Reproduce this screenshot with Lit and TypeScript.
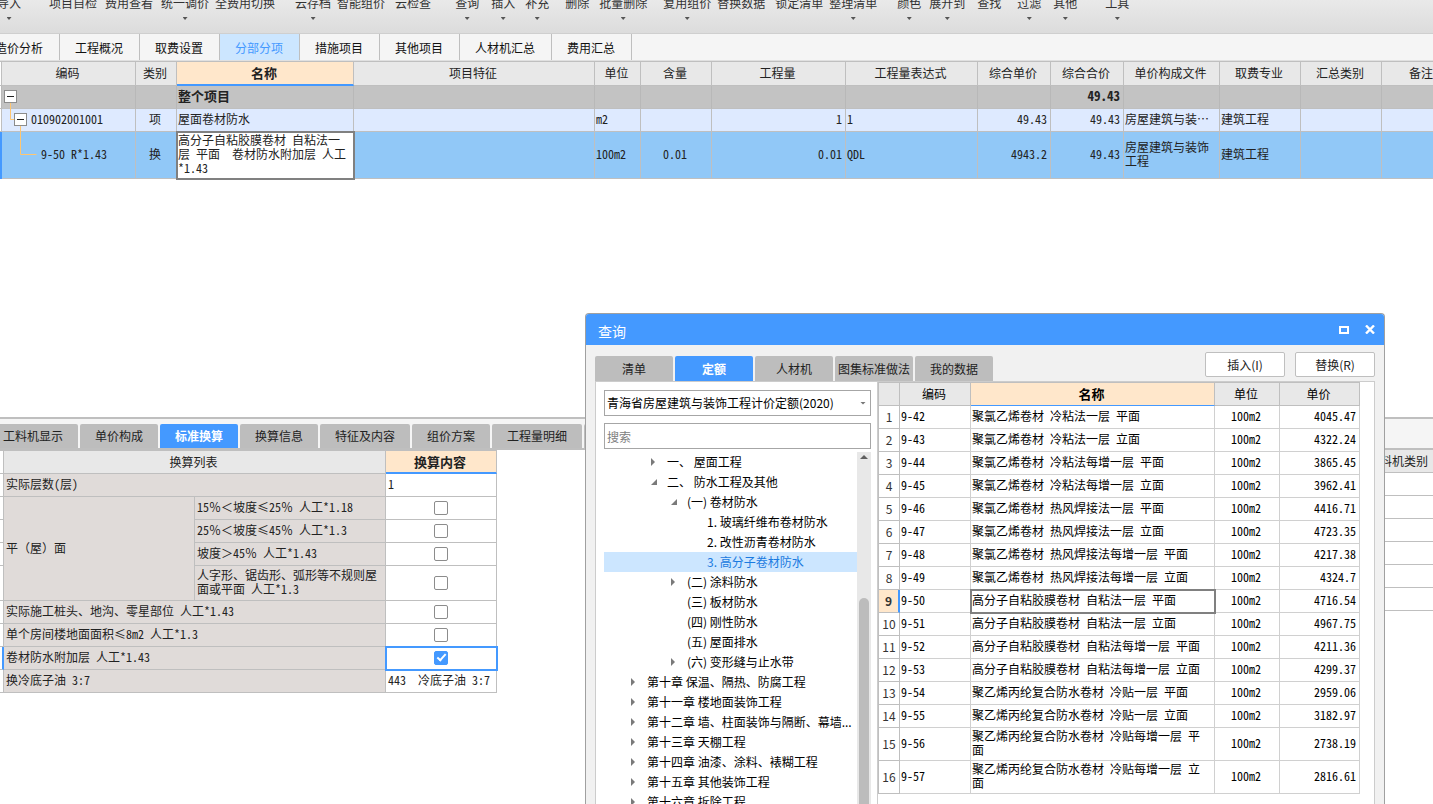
import { LitElement, html, css, svg, nothing } from "lit";
import { customElement } from "lit/decorators.js";
import { classMap } from "lit/directives/class-map.js";

const base = css`
  *, *::before, *::after { box-sizing: border-box; }
  :host {
    --ui: "Noto Sans CJK SC", "Noto Sans", sans-serif;
    --grid: "Noto Sans Mono CJK SC", "Noto Sans CJK SC", monospace;
    --blue: #4499ff;
    --line: #bfbfbf;
    --accent: #ffe7cb;
    box-sizing: border-box;
    font: 12px/18px var(--ui);
    color: #222;
  }
  button { font: inherit; color: inherit; border: 0; background: none; padding: 0; margin: 0; white-space: nowrap; }
  table { border-collapse: separate; border-spacing: 0; table-layout: fixed; font: 12px/14px var(--grid); }
  th, td { padding: 0 3px 2px 1px; font-weight: 400; text-align: left; vertical-align: middle; border: 0 solid var(--line); border-width: 0 1px 1px 0; overflow: hidden; }
  th { background: #e8e8e8; text-align: center; white-space: nowrap; }
  th.on { background: var(--accent); font-size: 13px; font-weight: 700; padding-bottom: 0; border-bottom: 2px solid var(--blue); }
  .c { text-align: center; }
  .r { text-align: right; }
`;

type Tool = [gap: number, label: string, menu?: boolean];
const TOOLS: Tool[] = [
  [0, "导入", true], [28, "项目自检"], [8, "费用查看"], [8, "统一调价", true], [6, "全费用切换"],
  [20, "云存档", true], [6, "智能组价"], [10, "云检查"], [24, "查询", true], [12, "插入", true],
  [10, "补充", true], [16, "删除"], [10, "批量删除", true], [16, "复用组价", true], [6, "替换数据"],
  [10, "锁定清单"], [6, "整理清单", true], [20, "颜色", true], [8, "展开到", true], [12, "查找"],
  [16, "过滤", true], [12, "其他", true], [28, "工具", true],
];
const TABS = ["造价分析", "工程概况", "取费设置", "分部分项", "措施项目", "其他项目", "人材机汇总", "费用汇总"];

@customElement("tool-bar")
class ToolBar extends LitElement {
  static styles = [base, css`
    :host { display: block; }
    .tools { display: flex; align-items: flex-start; height: 34px; overflow: hidden; background: linear-gradient(#e9e9e9, #dcdcdc); border-bottom: 1px solid #cfcfcf; }
    .tools button { display: flex; flex-direction: column; align-items: center; gap: 5px; flex: none; margin-top: -6px; color: #333; }
    .tools button:first-child { margin-left: -3px; }
    .arrow { width: 5px; height: 3px; background: #555; clip-path: polygon(0 0, 100% 0, 50% 100%); }
    .tabs { display: flex; height: 27px; background: #f5f5f5; border-bottom: 1px solid #e0e0e0; overflow: hidden; }
    .tabs button { flex: none; padding: 2px 16px 0 15px; border-right: 1px solid var(--line); color: #111; }
    .tabs button:first-child { margin-left: -20px; }
    .tabs .active { background: #cce6ff; color: var(--blue); }
  `];
  render() {
    return html`
      <div class="tools" role="toolbar">
        ${TOOLS.map(([gap, label, menu]) => html`
          <button style=${gap ? `margin-left:${gap}px` : nothing}>
            <span>${label}</span>${menu ? html`<span class="arrow"></span>` : nothing}
          </button>`)}
      </div>
      <nav class="tabs">
        ${TABS.map((t) => html`<button class=${classMap({ active: t === "分部分项" })}>${t}</button>`)}
      </nav>`;
  }
}

const expander = (x: number) => svg`
  <rect x=${x + 0.5} y="4.5" width="12" height="12" fill="#fff" stroke="#8c8c8c"></rect>
  <path d=${`M${x + 3} 10.5h7`} stroke="#222"></path>`;

@customElement("bill-grid")
class BillGrid extends LitElement {
  static styles = [base, css`
    :host { display: block; overflow: hidden; }
    table { width: 1462px; border-top: 1px solid var(--line); }
    .w-gut { width: 2px; } .w-code { width: 134px; } .w-kind { width: 41px; } .w-name { width: 177px; }
    .w-feat { width: 241px; } .w-unit { width: 46px; } .w-cont { width: 71px; } .w-qty { width: 134px; }
    .w-expr { width: 132px; } .w-price { width: 73px; } .w-file { width: 96px; } .w-cat { width: 81px; }
    .gut { padding: 0; background: #fff; }
    thead tr { height: 24px; }
    tbody tr { height: 23px; }
    .total td { background: #c3c3c3; font-size: 13px; font-weight: 700; border-right-color: #b8b8b8; }
    .item td { background: #deeaff; }
    .quota { height: 47px; }
    .quota td { background: #91c8f7; }
    tbody td.gut { background: #fff; }
    .quota td.gut { background: var(--blue); border-color: var(--blue); }
    td.code { padding: 0; overflow: visible; }
    .node { display: flex; align-items: center; }
    .node svg { display: block; overflow: visible; flex: none; }
    .node span { padding-bottom: 2px; }
    .quota td.edit { background: #fff; outline: 2px solid #808080; outline-offset: -1px; white-space: pre-wrap; }
    .one { white-space: nowrap; }
  `];
  render() {
    const heads = ["编码", "类别", "名称", "项目特征", "单位", "含量", "工程量", "工程量表达式", "综合单价", "综合合价", "单价构成文件", "取费专业", "汇总类别", "备注"];
    const widths = ["gut", "code", "kind", "name", "feat", "unit", "cont", "qty", "expr", "price", "price", "file", "cat", "cat", "cat"];
    return html`
      <table>
        <colgroup>${widths.map((w) => html`<col class="w-${w}">`)}</colgroup>
        <thead><tr><th class="gut"></th>${heads.map((h) => html`<th class=${classMap({ on: h === "名称" })}>${h}</th>`)}</tr></thead>
        <tbody>
          <tr class="total">
            <td class="gut"></td>
            <td class="code"><div class="node"><svg width="20" height="22">
              <path d="M8.5 17v6" stroke="#ffc671"></path>${expander(2)}</svg></div></td>
            <td></td><td>整个项目</td><td></td><td></td><td></td><td></td><td></td><td></td>
            <td class="r">49.43</td><td></td><td></td><td></td><td></td>
          </tr>
          <tr class="item">
            <td class="gut"></td>
            <td class="code"><div class="node"><svg width="29" height="22">
              <path d="M8.5 0v10.5h4M18.5 17v6" fill="none" stroke="#ffc671"></path>${expander(12)}</svg><span>010902001001</span></div></td>
            <td class="c">项</td><td>屋面卷材防水</td><td></td><td>m2</td><td></td><td class="r">1</td><td>1</td>
            <td class="r">49.43</td><td class="r">49.43</td><td class="one">房屋建筑与装…</td><td>建筑工程</td><td></td><td></td>
          </tr>
          <tr class="quota">
            <td class="gut"></td>
            <td class="code"><div class="node"><svg width="39" height="46">
              <path d="M18.5 0v22.5h16" fill="none" stroke="#ffc671"></path></svg><span>9-50 R*1.43</span></div></td>
            <td class="c">换</td><td class="edit">高分子自粘胶膜卷材 自粘法一层 平面  卷材防水附加层 人工*1.43</td><td></td>
            <td>100m2</td><td class="c">0.01</td><td class="r">0.01</td><td>QDL</td>
            <td class="r">4943.2</td><td class="r">49.43</td><td>房屋建筑与装饰工程</td><td>建筑工程</td><td></td><td></td>
          </tr>
        </tbody>
      </table>`;
  }
}

@customElement("detail-panel")
class DetailPanel extends LitElement {
  static styles = [base, css`
    :host { display: block; overflow: hidden; border-top: 2px solid var(--line); background: #fff; }
    .tabs { display: flex; gap: 2px; height: 31px; padding-top: 5px; background: #f5f5f5; border-bottom: 2px solid var(--line); }
    .tabs button { flex: none; padding: 0 15px; background: #bdbdbd; border-radius: 2px 2px 0 0; }
    .tabs button:first-child { margin-left: -12px; }
    .tabs .active { background: var(--blue); color: #fff; font-weight: 700; }
    .body { display: flex; justify-content: space-between; align-items: flex-start; }
    .conv { width: 497px; flex: none; border-top: 1px solid var(--line); }
    .w-gut { width: 4px; } .w-half { width: 191px; } .w-val { width: 111px; }
    tr { height: 23px; }
    .tall { height: 35px; }
    th { padding-bottom: 0; }
    .conv td { background: #e0dbd9; padding: 0 2px 2px; }
    .conv .gut { padding: 0; background: #fff; }
    .conv .val { background: #fff; white-space: pre; }
    .conv .box { padding: 0; }
    .conv .cur { border-right: 2px solid var(--blue); }
    .conv .focus { outline: 2px solid var(--blue); outline-offset: -1px; }
    input { appearance: none; display: block; margin: 0 auto; width: 14px; height: 14px; border: 1px solid #8c8c8c; border-radius: 2px; background: #fff; position: relative; }
    input:checked { background: var(--blue); border-color: var(--blue); }
    input:checked::after { content: ""; position: absolute; left: 2px; top: 2px; width: 9px; height: 5px; border: solid #fff; border-width: 0 0 2px 2px; transform: rotate(-48deg); }
    .work { width: 848px; }
    .w-cls { width: 68px; }
    .work th, .work td { border-right: 0; }
  `];
  check(label: string, on = false) {
    return html`<td class="val box ${on ? "focus" : ""}"><input type="checkbox" aria-label=${label} ?checked=${on}></td>`;
  }
  row(label: string, on = false) {
    return html`<tr><td class="gut ${on ? "cur" : ""}"></td><td colspan="2">${label}</td>${this.check(label, on)}</tr>`;
  }
  render() {
    const tabs = ["工料机显示", "单价构成", "标准换算", "换算信息", "特征及内容", "组价方案", "工程量明细", "反查图形工程量"];
    const slopes = ["25％＜坡度≤45％ 人工*1.3", "坡度＞45％ 人工*1.43", "人字形、锯齿形、弧形等不规则屋面或平面 人工*1.3"];
    const first = "15％＜坡度≤25％ 人工*1.18";
    return html`
      <nav class="tabs">${tabs.map((t) => html`<button class=${classMap({ active: t === "标准换算" })}>${t}</button>`)}</nav>
      <div class="body">
        <table class="conv">
          <colgroup><col class="w-gut"><col class="w-half"><col class="w-half"><col class="w-val"></colgroup>
          <thead><tr><th class="gut"></th><th colspan="2">换算列表</th><th class="on">换算内容</th></tr></thead>
          <tbody>
            <tr><td class="gut"></td><td colspan="2">实际层数(层)</td><td class="val">1</td></tr>
            <tr><td class="gut"></td><td rowspan="4">平（屋）面</td><td>${first}</td>${this.check(first)}</tr>
            ${slopes.map((s, i) => html`<tr class=${i === 2 ? "tall" : ""}><td class="gut"></td><td>${s}</td>${this.check(s)}</tr>`)}
            ${this.row("实际施工桩头、地沟、零星部位 人工*1.43")}
            ${this.row("单个房间楼地面面积≤8m2 人工*1.3")}
            ${this.row("卷材防水附加层 人工*1.43", true)}
            <tr><td class="gut"></td><td colspan="2">换冷底子油 3:7</td><td class="val">443  冷底子油 3:7</td></tr>
          </tbody>
        </table>
        <table class="work">
          <colgroup><col><col class="w-cls"></colgroup>
          <thead><tr><th></th><th>工料机类别</th></tr></thead>
          <tbody>${[1, 2, 3, 4, 5, 6].map(() => html`<tr><td></td><td></td></tr>`)}</tbody>
        </table>
      </div>`;
  }
}

type Node = [level: number, label: string, state?: "open" | "shut"];
const TREE: Node[] = [
  [1, "一、 屋面工程", "shut"], [1, "二、 防水工程及其他", "open"], [2, "(一) 卷材防水", "open"],
  [3, "1. 玻璃纤维布卷材防水"], [3, "2. 改性沥青卷材防水"], [3, "3. 高分子卷材防水"],
  [2, "(二) 涂料防水", "shut"], [2, "(三) 板材防水"], [2, "(四) 刚性防水"], [2, "(五) 屋面排水"],
  [2, "(六) 变形缝与止水带", "shut"], [0, "第十章 保温、隔热、防腐工程", "shut"],
  [0, "第十一章 楼地面装饰工程", "shut"], [0, "第十二章 墙、柱面装饰与隔断、幕墙...", "shut"],
  [0, "第十三章 天棚工程", "shut"], [0, "第十四章 油漆、涂料、裱糊工程", "shut"],
  [0, "第十五章 其他装饰工程", "shut"], [0, "第十六章 拆除工程", "shut"],
];
const QUOTAS: [string, string, string][] = [
  ["9-42", "聚氯乙烯卷材 冷粘法一层 平面", "4045.47"],
  ["9-43", "聚氯乙烯卷材 冷粘法一层 立面", "4322.24"],
  ["9-44", "聚氯乙烯卷材 冷粘法每增一层 平面", "3865.45"],
  ["9-45", "聚氯乙烯卷材 冷粘法每增一层 立面", "3962.41"],
  ["9-46", "聚氯乙烯卷材 热风焊接法一层 平面", "4416.71"],
  ["9-47", "聚氯乙烯卷材 热风焊接法一层 立面", "4723.35"],
  ["9-48", "聚氯乙烯卷材 热风焊接法每增一层 平面", "4217.38"],
  ["9-49", "聚氯乙烯卷材 热风焊接法每增一层 立面", "4324.7"],
  ["9-50", "高分子自粘胶膜卷材 自粘法一层 平面", "4716.54"],
  ["9-51", "高分子自粘胶膜卷材 自粘法一层 立面", "4967.75"],
  ["9-52", "高分子自粘胶膜卷材 自粘法每增一层 平面", "4211.36"],
  ["9-53", "高分子自粘胶膜卷材 自粘法每增一层 立面", "4299.37"],
  ["9-54", "聚乙烯丙纶复合防水卷材 冷贴一层 平面", "2959.06"],
  ["9-55", "聚乙烯丙纶复合防水卷材 冷贴一层 立面", "3182.97"],
  ["9-56", "聚乙烯丙纶复合防水卷材 冷贴每增一层 平面", "2738.19"],
  ["9-57", "聚乙烯丙纶复合防水卷材 冷贴每增一层 立面", "2816.61"],
];

@customElement("query-window")
class QueryWindow extends LitElement {
  static styles = [base, css`
    :host { display: flex; flex-direction: column; overflow: hidden; border: 1px solid #a0a0a0; border-bottom: 0; border-radius: 4px 4px 0 0; background: #f1f1f1; }
    header { display: flex; align-items: center; gap: 16px; flex: none; height: 31px; padding: 0 9px 0 12px; background: var(--blue); color: #fff; }
    h1 { flex: 1; margin: 0; padding-top: 2px; font-size: 14px; line-height: 20px; font-weight: 400; }
    header button, header svg { display: block; }
    .bar { display: flex; justify-content: space-between; flex: none; height: 36px; padding: 7px 9px 0; }
    .tabs { display: flex; gap: 2px; padding-top: 4px; }
    .tabs button { width: 78px; background: #bdbdbd; border-radius: 2px 2px 0 0; }
    .tabs .active { background: var(--blue); color: #fff; font-weight: 700; }
    .acts { display: flex; gap: 10px; }
    .acts button { width: 80px; height: 25px; background: #fff; border: 1px solid var(--line); border-radius: 2px; }
    .panes { flex: 1; min-height: 0; display: flex; margin: 0 9px; border: 1px solid #ccc; border-bottom: 0; background: #fff; overflow: hidden; }
    .side { width: 282px; flex: none; display: flex; flex-direction: column; padding: 8px 6px 0 8px; border-right: 1px solid #ccc; }
    .pick { display: grid; align-items: center; margin-bottom: 7px; }
    .pick > * { grid-area: 1 / 1; }
    .pick .arrow { justify-self: end; margin-right: 5px; width: 6px; height: 3px; background: #777; clip-path: polygon(0 0, 100% 0, 50% 100%); pointer-events: none; }
    select, .search { appearance: none; width: 100%; height: 26px; margin: 0; padding: 0 2px; border: 1px solid #a6a6a6; border-radius: 0; background: #fff; color: #000; font: 12px/18px var(--ui); }
    .search::placeholder { color: #808080; opacity: 1; }
    .list { flex: 1; min-height: 0; display: flex; margin-top: 3px; }
    ul { flex: 1; min-width: 0; list-style: none; margin: 0; padding: 0; color: #000; }
    li { display: flex; align-items: center; gap: 8px; height: 20px; line-height: 20px; white-space: nowrap; }
    li svg { flex: none; }
    li.active { background: #cce6ff; color: #1a7ae0; }
    .l0 { padding-left: 27px; } .l1 { padding-left: 47px; } .l2 { padding-left: 67px; } .l3 { padding-left: 87px; }
    .scroll { width: 14px; flex: none; display: flex; flex-direction: column; align-items: center; background: #e8e8e8; padding-top: 3px; overflow: hidden; }
    .up { width: 8px; height: 4px; flex: none; background: #606060; clip-path: polygon(50% 0, 100% 100%, 0 100%); }
    .thumb { width: 10px; flex: 1; margin: 139px 0 -10px; border-radius: 5px; background: #bcbcbc; }
    .main { flex: 1; min-width: 0; overflow: hidden; }
    table { width: 482px; color: #000; border-top: 1px solid var(--line); border-left: 1px solid var(--line); }
    .w-no { width: 21px; } .w-code { width: 71px; } .w-name { width: 244px; } .w-unit { width: 65px; } .w-price { width: 80px; }
    tr { height: 23px; }
    tr.tall { height: 33px; }
    th { padding-bottom: 0; }
    th.on { border-bottom-width: 1px; }
    td { border-color: #d0d0d0; }
    td.no { padding: 0; text-align: center; font-family: var(--ui); color: #333; border-color: var(--line); }
    .cur td.no { background: var(--accent); font-weight: 700; border-right: 2px solid var(--blue); }
    .cur td.name { outline: 2px solid #808080; outline-offset: -1px; }
  `];
  glyph(state?: "open" | "shut") {
    return svg`<svg width="8" height="8" viewBox="0 0 8 8" fill="#7a7a7a">${
      state === "open" ? svg`<path d="M6 1v6H0z"></path>` : state === "shut" ? svg`<path d="M0 0l4 4-4 4z"></path>` : nothing}</svg>`;
  }
  render() {
    return html`
      <header>
        <h1>查询</h1>
        <button aria-label="最大化"><svg width="10" height="8"><path d="M1 1h8v6H1z" fill="none" stroke="#fff" stroke-width="2"></path></svg></button>
        <button aria-label="关闭"><svg width="10" height="9"><path d="M1 .5l8 8M9 .5l-8 8" stroke="#fff" stroke-width="2.4"></path></svg></button>
      </header>
      <div class="bar">
        <nav class="tabs">${["清单", "定额", "人材机", "图集标准做法", "我的数据"].map((t) => html`<button class=${classMap({ active: t === "定额" })}>${t}</button>`)}</nav>
        <div class="acts"><button>插入(I)</button><button>替换(R)</button></div>
      </div>
      <div class="panes">
        <div class="side">
          <div class="pick">
            <select aria-label="定额库"><option>青海省房屋建筑与装饰工程计价定额(2020)</option></select>
            <span class="arrow"></span>
          </div>
          <input class="search" type="text" placeholder="搜索" aria-label="搜索">
          <div class="list">
            <ul role="tree">${TREE.map(([lv, label, st]) => html`
              <li role="treeitem" class="l${lv} ${label.startsWith("3.") ? "active" : ""}">${this.glyph(st)}<span>${label}</span></li>`)}</ul>
            <div class="scroll"><div class="up"></div><div class="thumb"></div></div>
          </div>
        </div>
        <div class="main">
          <table>
            <colgroup><col class="w-no"><col class="w-code"><col class="w-name"><col class="w-unit"><col class="w-price"></colgroup>
            <thead><tr><th></th><th>编码</th><th class="on">名称</th><th>单位</th><th>单价</th></tr></thead>
            <tbody>${QUOTAS.map(([code, name, price], i) => html`
              <tr class=${classMap({ cur: code === "9-50", tall: i > 13 })}>
                <td class="no">${i + 1}</td><td>${code}</td><td class="name">${name}</td><td class="c">100m2</td><td class="r">${price}</td>
              </tr>`)}</tbody>
          </table>
        </div>
      </div>`;
  }
}

@customElement("app-root")
class AppRoot extends LitElement {
  static styles = css`
    :host { display: flex; flex-direction: column; position: relative; height: 100vh; overflow: hidden; background: #fff; }
    tool-bar { flex: none; }
    bill-grid { flex: 1; min-height: 0; }
    detail-panel { flex: none; height: 387px; }
    query-window { position: absolute; left: 585px; top: 313px; bottom: 0; width: 800px; }
  `;
  render() {
    return html`<tool-bar></tool-bar><bill-grid></bill-grid><detail-panel></detail-panel><query-window role="dialog" aria-label="查询"></query-window>`;
  }
}
